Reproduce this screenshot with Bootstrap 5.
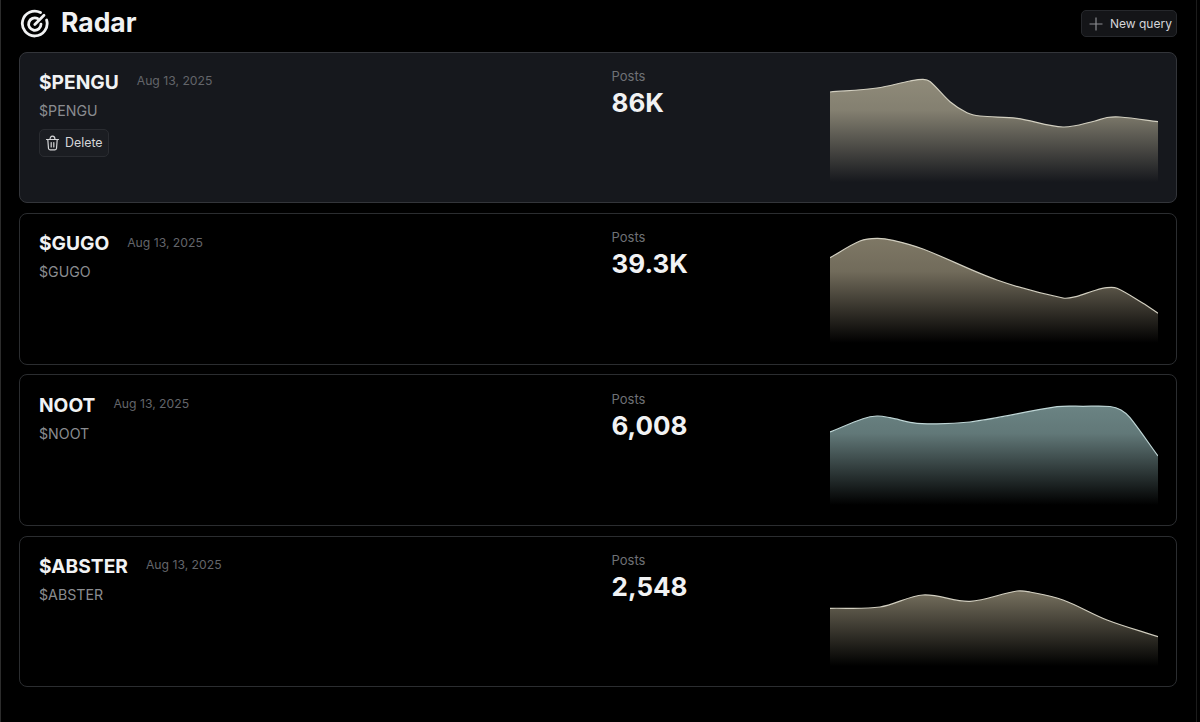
<!DOCTYPE html>
<html lang="en">
<head>
    <meta charset="UTF-8">
    <meta name="viewport" content="width=device-width, initial-scale=1.0">
    <title>Radar</title>
    <link rel="stylesheet" href="https://cdn.jsdelivr.net/npm/bootstrap@5.3.2/dist/css/bootstrap.min.css">
    <style>
        html, body {
            background-color: #000;
            height: 100%;
        }
        body {
            font-family: Inter, "Liberation Sans", sans-serif;
            color: #f1f2f3;
            overflow: hidden;
            width: 1197px;
            border-left: 1px solid #2c2c2c;
            border-right: 1px solid #1c1c1c;
            padding: 10px 19px 0 18px;
        }
        .radar-head {
            height: 27px;
            margin-bottom: 14.9px;
        }
        .radar-logo {
            margin-left: 1px;
        }
        .radar-title {
            font-size: 26.5px;
            font-weight: 700;
            line-height: 27px;
            margin: -2px 0 0 11px;
        }
        .ghost-btn {
            display: inline-flex;
            align-items: center;
            background: #141518;
            border: 1px solid #26282c;
            border-radius: 5px;
            color: #d5d6d8;
            font-size: 12px;
            line-height: 1;
            padding: 0;
        }
        .new-btn {
            height: 27px;
            width: 96px;
            padding-left: 7px;
            gap: 7px;
        }
        .del-btn {
            height: 28px;
            width: 70px;
            padding-left: 5px;
            gap: 5px;
            font-size: 12.4px;
            background: #1b1d22;
            border-color: #2a2c31;
        }
        .query-card {
            height: 151.5px;
            background: #000;
            border: 1px solid #2b2d30;
            border-radius: 8px;
            margin-bottom: 9.8px;
            padding: 19.2px 18px 0 19px;
        }
        .query-card.active-card {
            background: #16181d;
            border-color: #33353a;
        }
        .info-col {
            width: 572.5px;
            margin-top: -1px;
        }
        .query-name {
            font-size: 19.2px;
            font-weight: 700;
            line-height: 23px;
            margin: 0;
        }
        .query-date {
            font-size: 12.2px;
            color: #63656a;
            margin: -2px 0 0 18px;
        }
        .query-sub {
            font-size: 14.2px;
            color: #8a8c90;
            line-height: 17px;
            margin: 8px 0 10px;
        }
        .posts-col {
            width: 218.5px;
        }
        .posts-label {
            font-size: 13px;
            line-height: 15px;
            color: #6f7176;
            margin-top: -3px;
        }
        .posts-num {
            font-size: 26px;
            font-weight: 700;
            line-height: 30px;
            margin-top: 4px;
        }
        .spark {
            display: block;
            width: 328px;
            height: 110px;
            flex: none;
        }
    </style>
</head>
<body>

    <div class="radar-head d-flex align-items-center">
        <svg class="radar-logo" width="30" height="30" viewBox="0 0 30 30" fill="none" stroke="#f1f2f3" stroke-width="2.8" stroke-linecap="round">
            <path d="M20.5 3.6A12.4 12.4 0 1 0 26.6 11"/>
            <path d="M17.6 9.6A6.2 6.2 0 1 0 21 15.2"/>
            <path d="M14.8 15.4L24 6.2"/>
        </svg>
        <h1 class="radar-title">Radar</h1>
        <button class="ghost-btn new-btn ms-auto" type="button">
            <svg width="14" height="14" viewBox="0 0 14 14" fill="none" stroke="#8b8d91" stroke-width="1.2"><path d="M7 .5v13M.5 7h13"/></svg>
            New query
        </button>
    </div>

    <div id="list"></div>

    <script>
        // x,y points read off the reference, drawn as smooth curves
        const rows = [
            { name: "$PENGU", sub: "$PENGU", posts: "86K", active: true, color: "#a8a28c", line: "#d2cfc0",
              pts: [[0,20],[47,16],[80,9],[93,7.3],[100,9.5],[120,29.7],[137,40.7],[150,44],[187,46.3],[233,55],[265,49],[277,45.5],[290,45],[328,49.7]] },
            { name: "$GUGO", sub: "$GUGO", posts: "39.3K", color: "#978f79", line: "#d2cfc0",
              pts: [[0,24.7],[30,8],[47,5.3],[63,7.3],[93,16],[167,47],[233,65],[247,63.3],[263,58],[277,54.7],[287,55.3],[313,70.3],[328,80.3]] },
            { name: "NOOT", sub: "$NOOT", posts: "6,008", color: "#82a0a0", line: "#bfd6d6",
              pts: [[0,37],[33,23.7],[47,21],[60,22.7],[87,28.3],[140,27],[227,11.7],[253,11.3],[280,11.5],[291,15],[300,22.7],[328,61]] },
            { name: "$ABSTER", sub: "$ABSTER", posts: "2,548", color: "#978f79", line: "#d2cfc0",
              pts: [[0,52.3],[50,51],[93,39],[140,45.3],[187,35],[200,36],[233,44],[277,64],[328,80.7]] }
        ];

        function curve(pts) {
            let d = "M" + pts[0].join(" ");
            for (let i = 0; i < pts.length - 1; i++) {
                const p0 = pts[i - 1] || pts[i], p1 = pts[i], p2 = pts[i + 1], p3 = pts[i + 2] || p2;
                const dx = (p2[0] - p1[0]) / 3;
                const s1 = (p2[1] - p0[1]) / (p2[0] - p0[0]);
                const s2 = (p3[1] - p1[1]) / (p3[0] - p1[0]);
                d += " C" + [p1[0] + dx, p1[1] + s1 * dx, p2[0] - dx, p2[1] - s2 * dx, p2[0], p2[1]].map(n => n.toFixed(1)).join(" ");
            }
            return d;
        }

        const trash = '<svg width="15" height="16" viewBox="0 0 15 16" fill="none" stroke="#d5d6d8" stroke-width="1.2" stroke-linejoin="round" stroke-linecap="round"><path d="M1.5 4.5h12M2.8 4.5l.7 9a1.5 1.5 0 0 0 1.5 1.3h5a1.5 1.5 0 0 0 1.5-1.3l.7-9M5 4.5c0-2.2.9-3.3 2.5-3.3s2.5 1.1 2.5 3.3M6.2 7.5v4.5M8.8 7.5v4.5"/></svg>';

        document.getElementById("list").innerHTML = rows.map((r, i) => {
            const line = curve(r.pts);
            return `<div class="query-card d-flex ${r.active ? "active-card" : ""}">
                <div class="info-col">
                    <div class="d-flex align-items-center">
                        <h2 class="query-name">${r.name}</h2>
                        <span class="query-date">Aug 13, 2025</span>
                    </div>
                    <div class="query-sub">${r.sub}</div>
                    ${r.active ? `<button class="ghost-btn del-btn" type="button">${trash}Delete</button>` : ""}
                </div>
                <div class="posts-col">
                    <div class="posts-label">Posts</div>
                    <div class="posts-num">${r.posts}</div>
                </div>
                <svg class="spark" viewBox="0 0 328 110">
                    <defs>
                        <linearGradient id="fill${i}" gradientUnits="userSpaceOnUse" x1="0" y1="0" x2="0" y2="110">
                            <stop offset="0" stop-color="${r.color}" stop-opacity=".85"/>
                            <stop offset=".35" stop-color="${r.color}" stop-opacity=".75"/>
                            <stop offset="1" stop-color="${r.color}" stop-opacity="0"/>
                        </linearGradient>
                    </defs>
                    <path d="${line} L328 110 L0 110 Z" fill="url(#fill${i})"/>
                    <path d="${line}" fill="none" stroke="${r.line}" stroke-width="1.2"/>
                </svg>
            </div>`;
        }).join("");
    </script>

    <script src="https://cdn.jsdelivr.net/npm/bootstrap@5.3.2/dist/js/bootstrap.bundle.min.js"></script>
</body>
</html>
